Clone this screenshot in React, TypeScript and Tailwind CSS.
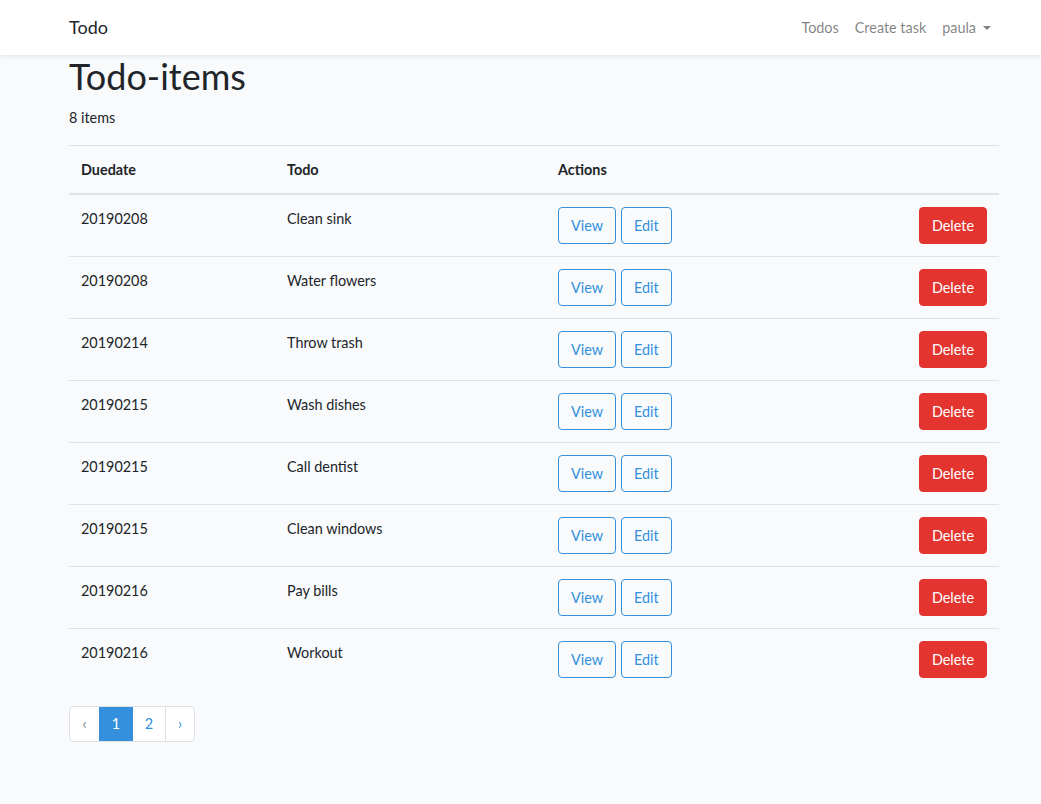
import React from "react";

const rows = [
  ["20190208", "Clean sink"],
  ["20190208", "Water flowers"],
  ["20190214", "Throw trash"],
  ["20190215", "Wash dishes"],
  ["20190215", "Call dentist"],
  ["20190215", "Clean windows"],
  ["20190216", "Pay bills"],
  ["20190216", "Workout"],
];

export default function App() {
  return (
    <div
      className="min-h-[804px] bg-[#f8fafc] text-[#212529] text-[14.4px] leading-[1.6]"
      style={{ fontFamily: "Lato, 'Noto Sans', sans-serif" }}
    >
      <nav className="bg-white shadow-[0_2px_4px_rgba(0,0,0,0.075)] py-2">
        <div className="w-[960px] ml-[54px] px-[15px] flex items-center justify-between">
          <span className="text-[18px] leading-[27px] py-[5px] text-[#212529]">Todo</span>
          <div className="flex items-center text-[rgba(0,0,0,0.5)]">
            <span className="px-2 py-2">Todos</span>
            <span className="px-2 py-2">Create task</span>
            <span className="px-2 py-2 flex items-center">
              paula
              <span className="ml-[7px] inline-block w-0 h-0 border-l-[4px] border-r-[4px] border-t-[4px] border-l-transparent border-r-transparent border-t-[rgba(0,0,0,0.5)]" />
            </span>
          </div>
        </div>
      </nav>
      <main className="w-[960px] ml-[54px] px-[15px]">
        <h1 className="text-[36px] leading-[1.2] font-normal mb-2">Todo-items</h1>
        <p className="mb-4">8 items</p>
        <table className="w-full border-collapse mb-4">
          <thead>
            <tr>
              <th className="w-[206px] text-left font-bold p-3 border-t border-[#dee2e6] border-b-2">Duedate</th>
              <th className="w-[271px] text-left font-bold p-3 border-t border-[#dee2e6] border-b-2">Todo</th>
              <th className="w-[250px] text-left font-bold p-3 border-t border-[#dee2e6] border-b-2">Actions</th>
              <th className="text-left font-bold p-3 border-t border-[#dee2e6] border-b-2"></th>
            </tr>
          </thead>
          <tbody>
            {rows.map(([d, t], i) => (
              <tr key={i}>
                <td className="p-3 align-top border-t border-[#dee2e6]">{d}</td>
                <td className="p-3 align-top border-t border-[#dee2e6]">{t}</td>
                <td className="p-3 align-top border-t border-[#dee2e6]">
                  <div className="flex gap-[5px]">
                    <button className="border border-[#3490dc] text-[#3490dc] rounded px-3 py-[6px] leading-[23px]">View</button>
                    <button className="border border-[#3490dc] text-[#3490dc] rounded px-3 py-[6px] leading-[23px]">Edit</button>
                  </div>
                </td>
                <td className="p-3 align-top border-t border-[#dee2e6] text-right">
                  <button className="border border-[#e3342f] bg-[#e3342f] text-white rounded px-3 py-[6px] leading-[23px]">Delete</button>
                </td>
              </tr>
            ))}
          </tbody>
        </table>
        <div className="flex">
          <div className="flex border border-[#dee2e6] rounded bg-white leading-[18px]">
            <span className="px-3 py-2 text-[#6c757d] w-[29px] flex justify-center">‹</span>
            <span className="px-3 py-2 bg-[#3490dc] text-white w-[34px] flex justify-center">1</span>
            <span className="px-3 py-2 text-[#3490dc] w-[33px] flex justify-center border-r border-[#dee2e6]">2</span>
            <span className="px-3 py-2 text-[#3490dc] w-[28px] flex justify-center">›</span>
          </div>
        </div>
      </main>
    </div>
  );
}
